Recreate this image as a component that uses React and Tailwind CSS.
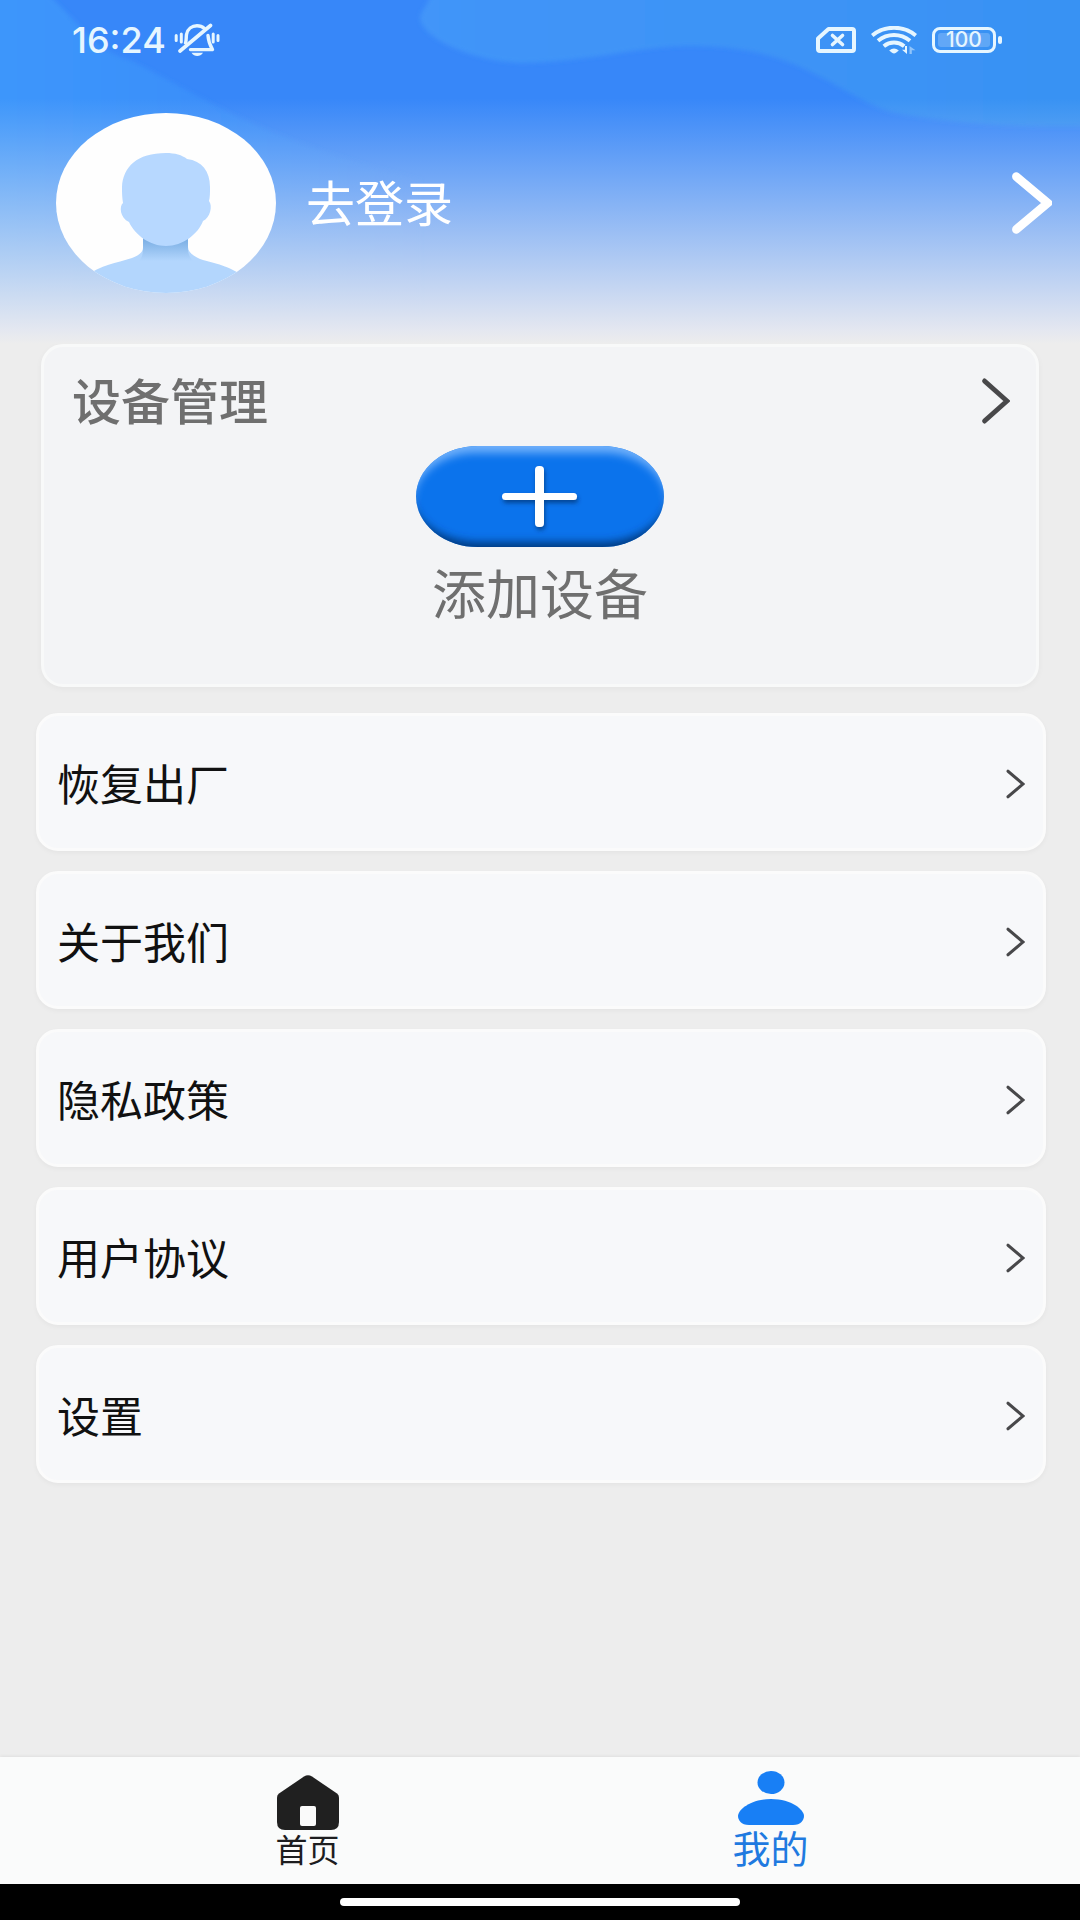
const menuItems = ['恢复出厂', '关于我们', '隐私政策', '用户协议', '设置'];

function Chevron({ className, strokeWidth = 3 }) {
  return (
    <svg className={className} viewBox="0 0 20 30" preserveAspectRatio="none" fill="none" aria-hidden="true">
      <path d="M3 3 L18 15 L3 27" stroke="currentColor" strokeWidth={strokeWidth} strokeLinecap="round" />
    </svg>
  );
}

function SilentIcon() {
  return (
    <svg className="w-[46px] h-[34px]" viewBox="0 0 46 34" fill="none" stroke="#e6f6ff" strokeLinecap="round" aria-hidden="true">
      <path d="M11.5 20 C12.5 17 12 15 12.5 11.5 C13.5 6 18 2.8 23 2.8 C26 2.8 28.5 3.8 30.5 5.5" strokeWidth="3.4" />
      <path d="M34 12.5 C34.3 17 34.5 20 38.5 26.6 H16.5" strokeWidth="3.4" strokeLinejoin="round" />
      <path d="M36.5 2.5 L6 28" strokeWidth="3.6" />
      <path d="M17.5 29.8 H29 C27.5 32.4 25.5 33 23.2 33 C21 33 19 32.4 17.5 29.8Z" fill="#e6f6ff" stroke="none" />
      <path d="M2.2 12.5 V17.5 M7.3 11 V19 M39.2 11 V19 M44 12.5 V17.5" strokeWidth="3" />
    </svg>
  );
}

function SimIcon() {
  return (
    <svg className="w-10 h-[26px]" viewBox="0 0 40 26" fill="none" stroke="#e6f6ff" aria-hidden="true">
      <path d="M12.5 2 H36 Q38 2 38 4 V22 Q38 24 36 24 H4 Q2 24 2 22 V11.5 Z" strokeWidth="4" strokeLinejoin="round" />
      <path d="M16.5 8.5 L26.5 17.5 M26.5 8.5 L16.5 17.5" strokeWidth="3.6" strokeLinecap="round" />
    </svg>
  );
}

function WifiIcon() {
  return (
    <svg className="w-[46px] h-[29px]" viewBox="0 0 46 29" fill="none" stroke="#e6f6ff" aria-hidden="true">
      <path d="M1.2 9.5 C13.5 -0.8 32.5 -0.8 44.8 9.5" strokeWidth="4" />
      <path d="M7 14.8 C16.5 7 29.5 7 39 14.8" strokeWidth="4" />
      <path d="M12.8 20.2 C19 15.2 27 15.2 33.2 20.2" strokeWidth="4" />
      <path d="M18.2 24.5 Q23 20.6 27.8 24.5 L25 26.8 Q23 28.2 21 26.8Z" fill="#e6f6ff" stroke="none" />
      <path d="M36 20 V28 L31 23.8 H34 V20Z" fill="#e6f6ff" stroke="none" />
      <path d="M38.5 28 V20 L44.5 24.2 H40.8 V28Z" fill="#e6f6ff" fillOpacity="0.5" stroke="none" />
    </svg>
  );
}

function StatusBar() {
  return (
    <div className="flex h-20 items-center justify-between pl-[72px] pr-[78px] text-[#e6f6ff]">
      <div className="flex items-center gap-2">
        <span className="font-['Inter',sans-serif] text-[36px] leading-10 font-medium">16:24</span>
        <SilentIcon />
      </div>
      <div className="flex items-center">
        <SimIcon />
        <span className="ml-[15px]"><WifiIcon /></span>
        <div className="ml-[15px] flex h-[26px] w-16 items-center rounded-[8px] border-3 border-[#e6f6ff] p-[3px]">
          <span className="flex h-full w-full items-center justify-center rounded-[3px] bg-white/20 font-['Inter',sans-serif] text-[21px] leading-5 font-medium">
            100
          </span>
        </div>
        <span className="ml-[2px] h-2 w-1 rounded-[2px] bg-[#e6f6ff]" />
      </div>
    </div>
  );
}

function Avatar() {
  return (
    <svg className="h-[180px] w-[220px] shrink-0" viewBox="0 0 220 180" aria-hidden="true">
      <defs>
        <clipPath id="avatarClip">
          <ellipse cx="110" cy="90" rx="110" ry="90" />
        </clipPath>
        <linearGradient id="neck" x1="0" y1="0" x2="0" y2="1">
          <stop offset="0" stopColor="#74a8dd" />
          <stop offset="0.3" stopColor="#84b5e8" />
          <stop offset="1" stopColor="#b3d6fd" />
        </linearGradient>
      </defs>
      <g clipPath="url(#avatarClip)">
        <rect width="220" height="180" fill="#fefefe" />
        <path d="M30 163 C45 152 60 150 76 145 C84 142 87 139 87 134 V120 H132 V134 C132 139 136 142 144 146 C160 151 172 152 190 165 V180 H30Z" fill="#b3d6fd" />
        <path d="M87 122 H132 V136 C132 141 134 145 137 148 H83 C86 145 87 141 87 136Z" fill="url(#neck)" />
        <path d="M110 40 C119 40 126 42 131 46 C146 48 154 58 154 74 C154 80 154 84 153 88 C157 93 154 105 147 108 C142 121 127 133 110 133 C94 133 79 122 73 109 C64 105 63 93 67 90 C66 84 66 80 66 74 C67 54 81 40 110 40Z" fill="#b7d8ff" />
      </g>
    </svg>
  );
}

function Header() {
  return (
    <header className="relative h-[344px] bg-[#3787f9]">
      <svg className="absolute inset-0 h-full w-full" viewBox="0 0 1080 344" preserveAspectRatio="none" aria-hidden="true">
        <defs>
          <linearGradient id="waveRight" x1="0" y1="0" x2="1" y2="0">
            <stop offset="0" stopColor="#4295f9" />
            <stop offset="1" stopColor="#3892f3" />
          </linearGradient>
          <linearGradient id="waveLeft" x1="0" y1="0" x2="1" y2="0">
            <stop offset="0" stopColor="#3d97fb" />
            <stop offset="1" stopColor="#3787f9" />
          </linearGradient>
          <filter id="waveBlur">
            <feGaussianBlur stdDeviation="2" />
          </filter>
        </defs>
        <g filter="url(#waveBlur)">
          <path d="M440 -20 H1100 V126 C1020 128 950 124 890 112 C830 90 800 46 690 46 C640 46 590 62 520 63 C460 60 410 30 422 12 Q428 2 440 -20Z" fill="url(#waveRight)" />
          <path d="M-20 -20 H30 C80 18 90 50 130 60 C190 90 260 140 420 180 V370 H-20Z" fill="url(#waveLeft)" />
        </g>
      </svg>
      <div className="relative h-full bg-[linear-gradient(to_bottom,rgba(237,237,237,0)_98px,rgba(235,235,240,0.96)_330px,#ededed_344px)]">
        <StatusBar />
        <a href="#login" className="mt-[33px] flex items-center pr-[28px] pl-14 text-white">
          <Avatar />
          <span className="ml-[30px] flex-1 pb-1 text-[49px] leading-[60px]">去登录</span>
          <Chevron className="h-[66px] w-[42px]" strokeWidth={4} />
        </a>
      </div>
    </header>
  );
}

function DeviceCard() {
  return (
    <section className="mx-[41px] flex h-[343px] flex-col rounded-[22px] border-3 border-[#f8f9f9] bg-[#f3f4f6] shadow-[0_2px_6px_rgba(0,0,0,0.04)]">
      <a href="#devices" className="flex items-center justify-between pt-6 pr-[26px] pl-[28px] text-[#6f6f6f]">
        <h2 className="pb-1 text-[49px] leading-[56px] font-medium">设备管理</h2>
        <Chevron className="h-[50px] w-[30px] text-[#48484a]" strokeWidth={3} />
      </a>
      <button type="button" className="mx-auto mt-[15px] flex flex-col items-center text-[#6f6f6f]">
        <svg className="h-[101px] w-[248px]" viewBox="0 0 248 101" aria-hidden="true">
          <defs>
            <clipPath id="pill">
              <rect width="248" height="101" rx="62" ry="50.5" />
            </clipPath>
            <filter id="soft" x="-20%" y="-20%" width="140%" height="140%">
              <feGaussianBlur stdDeviation="4" />
            </filter>
            <filter id="plusShadow" x="-20%" y="-20%" width="150%" height="150%">
              <feDropShadow dx="1" dy="3" stdDeviation="2" floodColor="#05356f" floodOpacity="0.7" />
            </filter>
          </defs>
          <g clipPath="url(#pill)">
            <rect width="248" height="101" fill="#0b73ec" />
            <path d="M-20 -20 H268 V121 H-20Z M-3 58 A62 50 0 0 0 59 110 H189 A62 50 0 0 0 251 58 A62 50 0 0 0 189 7 H59 A62 50 0 0 0 -3 58Z" fill="#6fb0fb" fillRule="evenodd" filter="url(#soft)" />
            <path d="M-20 -20 H268 V121 H-20Z M-6 44 A68 52 0 0 0 62 96 H186 A68 52 0 0 0 254 44 A68 52 0 0 0 186 -15 H62 A68 52 0 0 0 -6 44Z" fill="#033a80" fillRule="evenodd" filter="url(#soft)" />
          </g>
          <g fill="#fff" filter="url(#plusShadow)">
            <rect x="86" y="47" width="75" height="7" rx="3.500" />
            <rect x="119" y="20" width="9" height="61" rx="4" />
          </g>
        </svg>
        <span className="mt-2 text-[54px] leading-[74px]">添加设备</span>
      </button>
    </section>
  );
}

function MenuList() {
  return (
    <nav className="mr-[34px] ml-9 mt-[26px] flex flex-col gap-5">
      {menuItems.map((label) => (
        <a
          key={label}
          href="#menu"
          className="flex h-[138px] items-center justify-between rounded-[22px] border-3 border-[#fbfbfb] bg-[#f7f8fa] pt-1 pr-[18px] pl-[18px] text-[#111] shadow-[0_2px_5px_rgba(0,0,0,0.04)]"
        >
          <span className="pb-1 text-[43px] leading-[60px]">{label}</span>
          <Chevron className="h-8 w-5 text-[#48484a]" strokeWidth={3} />
        </a>
      ))}
    </nav>
  );
}

function TabBar() {
  return (
    <nav className="mt-auto grid h-[127px] grid-cols-2 bg-[#fafbfb] pr-[78px] pl-[76px] shadow-[0_-1px_3px_rgba(0,0,0,0.06)]">
      <a href="#home" className="flex flex-col items-center pt-[18px] text-[#1d1d1f]">
        <svg className="h-[55px] w-[62px]" viewBox="0 0 62 55" aria-hidden="true">
          <path d="M27 1.500 Q31 -0.800 35 1.500 L60 18.500 Q62 20 62 22.500 V47 Q62 55 54 55 H8 Q0 55 0 47 V22.500 Q0 20 2 18.500Z" fill="#202020" />
          <rect x="23" y="31" width="16" height="20" rx="2" fill="#fafafa" />
        </svg>
        <span className="text-[32px] leading-9">首页</span>
      </a>
      <a href="#mine" className="flex flex-col items-center pt-[14px] text-[#1f7ae0]" aria-current="page">
        <svg className="h-[54px] w-[66px]" viewBox="0 0 66 54" fill="#187ff5" aria-hidden="true">
          <ellipse cx="33" cy="11.500" rx="13.500" ry="11.500" />
          <path d="M11 54 C3 54 0 49 0 45 C0 39 12 28 33 28 C54 28 66 39 66 45 C66 49 63 54 55 54Z" />
        </svg>
        <span className="text-[38px] leading-[44px]">我的</span>
      </a>
    </nav>
  );
}

export default function App() {
  return (
    <div className="flex min-h-screen flex-col bg-[#ededed] font-['Noto_Sans_CJK_SC',sans-serif]">
      <Header />
      <DeviceCard />
      <MenuList />
      <TabBar />
      <div className="flex h-9 items-center justify-center bg-black">
        <span className="h-2 w-[37%] rounded-full bg-white" />
      </div>
    </div>
  );
}
